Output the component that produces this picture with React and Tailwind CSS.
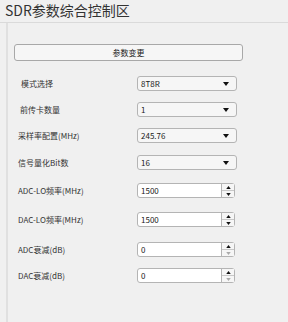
import React from "react";

const font = { fontFamily: '"Noto Sans CJK SC", "Liberation Sans", sans-serif' };

const Tri = ({ up, w, h, color }) => (
  <svg width={w} height={h} viewBox="0 0 6 4" fill={color}>
    {up ? <path d="M0 4 L3 0 L6 4 Z" /> : <path d="M0 0 L6 0 L3 4 Z" />}
  </svg>
);

const Select = ({ value }) => (
  <div className="flex h-[15px] w-[100px] items-center justify-between rounded-[3px] border border-[#b4b4b4] bg-[#f6f6f6] pl-[3px] pr-[7px] text-[8px] text-[#222]">
    <span>{value}</span>
    <Tri w={6} h={4} color="#111" />
  </div>
);

const NumberInput = ({ value, light }) => (
  <div className="flex h-[15px] w-[98px] items-stretch rounded-[3px] border border-[#b4b4b4] bg-white text-[8px] text-[#222]">
    <div className="flex flex-1 items-center pl-[3px]">{value}</div>
    <div className="flex w-[13px] flex-col border-l border-[#b4b4b4] bg-[#f6f6f6]">
      <div className="flex flex-1 items-center justify-center border-b border-[#c8c8c8]">
        <Tri up w={5} h={3} color="#111" />
      </div>
      <div className="flex flex-1 items-center justify-center">
        <Tri w={5} h={3} color={light ? "#aaa" : "#111"} />
      </div>
    </div>
  </div>
);

const rows = [
  { label: "模式选择", pl: "pl-[7px]", mt: "mt-[15px]", control: <Select value="8T8R" /> },
  { label: "前传卡数量", pl: "pl-[6px]", mt: "mt-[11px]", control: <Select value="1" /> },
  { label: "采样率配置(MHz)", pl: "pl-[4px]", mt: "mt-[11px]", control: <Select value="245.76" /> },
  { label: "信号量化Bit数", pl: "pl-[4px]", mt: "mt-[12px]", control: <Select value="16" /> },
  { label: "ADC-LO频率(MHz)", pl: "pl-[4px]", mt: "mt-[13px]", control: <NumberInput value="1500" /> },
  { label: "DAC-LO频率(MHz)", pl: "pl-[4px]", mt: "mt-[14px]", control: <NumberInput value="1500" /> },
  { label: "ADC衰减(dB)", pl: "pl-[4px]", mt: "mt-[15px]", control: <NumberInput value="0" light /> },
  { label: "DAC衰减(dB)", pl: "pl-[4px]", mt: "mt-[11px]", control: <NumberInput value="0" light /> },
];

export default function App() {
  return (
    <div className="flex h-[322px] w-[288px] flex-col bg-[#f0f0f0] text-[#333]" style={font}>
      <div className="h-[23px] border-b border-[#dadada] pl-[5px] text-[14px] leading-[21px] text-[#333]">
        SDR参数综合控制区
      </div>
      <div className="ml-[6px] flex-1 border-l-2 border-[#e0e0e0] pl-[6px] pt-[21px]">
        <button className="block h-[17px] w-[229px] rounded-[3px] border border-[#a8a8a8] bg-[#f6f6f6] text-[8px] leading-none text-[#222]">
          参数变更
        </button>
        {rows.map((r) => (
          <div key={r.label} className={"flex items-center " + r.mt}>
            <div className={"w-[123px] text-[8px] leading-none text-[#333] " + r.pl}>{r.label}</div>
            {r.control}
          </div>
        ))}
      </div>
    </div>
  );
}
